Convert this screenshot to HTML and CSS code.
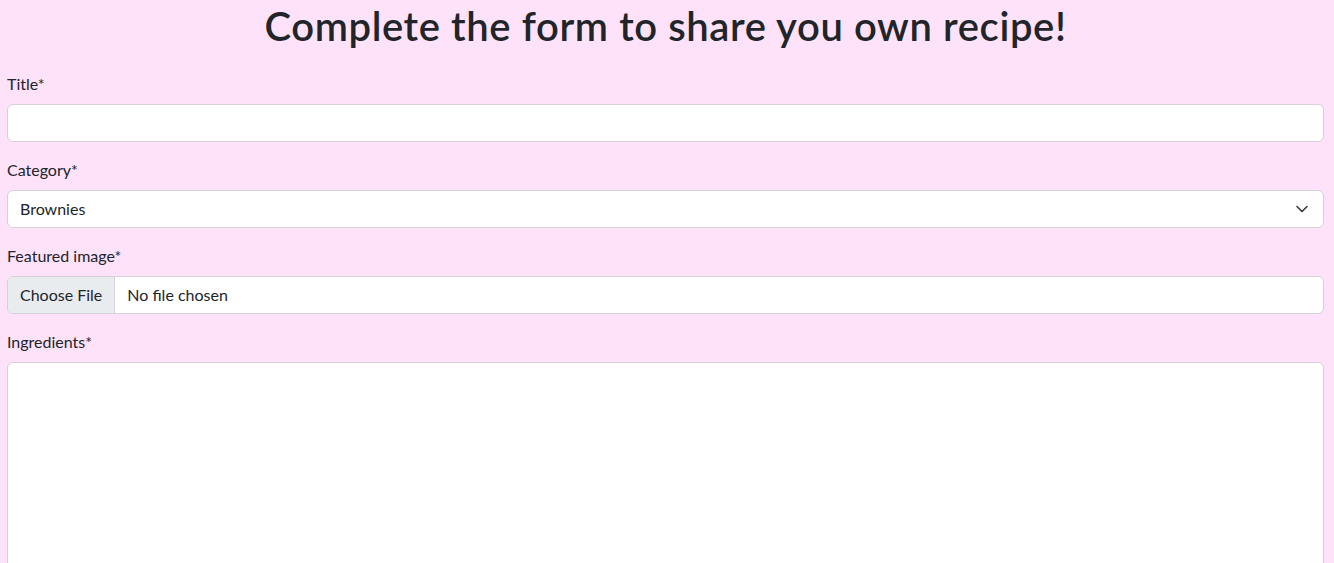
FILE: index.html
```html
<!DOCTYPE html>
<html lang="en">
<head>
<meta charset="utf-8">
<title>Share your recipe</title>
<link rel="stylesheet" href="styles.css">
</head>
<body>
<main class="page">
  <h1 class="page-title">Complete the form to share you own recipe!</h1>
  <form class="recipe-form">
    <div class="field">
      <label class="field-label" for="title">Title*</label>
      <input class="control" id="title" type="text">
    </div>
    <div class="field">
      <label class="field-label" for="category">Category*</label>
      <div class="select-wrap">
        <select class="control select" id="category">
          <option>Brownies</option>
        </select>
        <svg class="chevron" width="16" height="16" viewBox="0 0 16 16" aria-hidden="true"><path d="M3 5.5 8 10.5 13 5.5" fill="none" stroke="#343a40" stroke-width="1.6" stroke-linecap="round" stroke-linejoin="round"/></svg>
      </div>
    </div>
    <div class="field">
      <label class="field-label" for="image">Featured image*</label>
      <div class="control file-control">
        <span class="file-button">Choose File</span>
        <span class="file-name">No file chosen</span>
      </div>
    </div>
    <div class="field">
      <label class="field-label" for="ingredients">Ingredients*</label>
      <textarea class="control textarea" id="ingredients"></textarea>
    </div>
  </form>
</main>
</body>
</html>
```
FILE: styles.css
```css
* { box-sizing: border-box; }
html, body { margin: 0; }
body {
  background: #fde2fa;
  color: #212529;
  font-family: Lato, "Open Sans", sans-serif;
  font-size: 16px;
  line-height: 1.5;
}
.page {
  padding: 2px 10px 0 7px;
}
.page-title {
  margin: 0 0 22px;
  font-size: 40px;
  font-weight: 600;
  line-height: 48px;
  letter-spacing: 0.6px;
  text-align: center;
}
.recipe-form {
  display: flex;
  flex-direction: column;
  gap: 16px;
}
.field {
  display: flex;
  flex-direction: column;
}
.field-label {
  display: block;
  margin-bottom: 8px;
  line-height: 24px;
}
.control {
  display: block;
  width: 100%;
  height: 38px;
  padding: 6px 12px;
  font: inherit;
  color: #212529;
  background: #fff;
  border: 1px solid #d8cfd8;
  border-radius: 6px;
  outline: none;
}
.select-wrap { position: relative; }
.select {
  appearance: none;
  -webkit-appearance: none;
  padding-right: 36px;
}
.chevron {
  position: absolute;
  right: 14px;
  top: 11px;
  pointer-events: none;
}
.file-control {
  display: flex;
  align-items: stretch;
  padding: 0;
  overflow: hidden;
}
.file-button {
  display: flex;
  align-items: center;
  padding: 0 12px;
  background: #e9ecef;
  border-right: 1px solid #d8cfd8;
}
.file-name {
  display: flex;
  align-items: center;
  padding: 0 12px;
}
.textarea {
  height: 300px;
  resize: none;
}
```
